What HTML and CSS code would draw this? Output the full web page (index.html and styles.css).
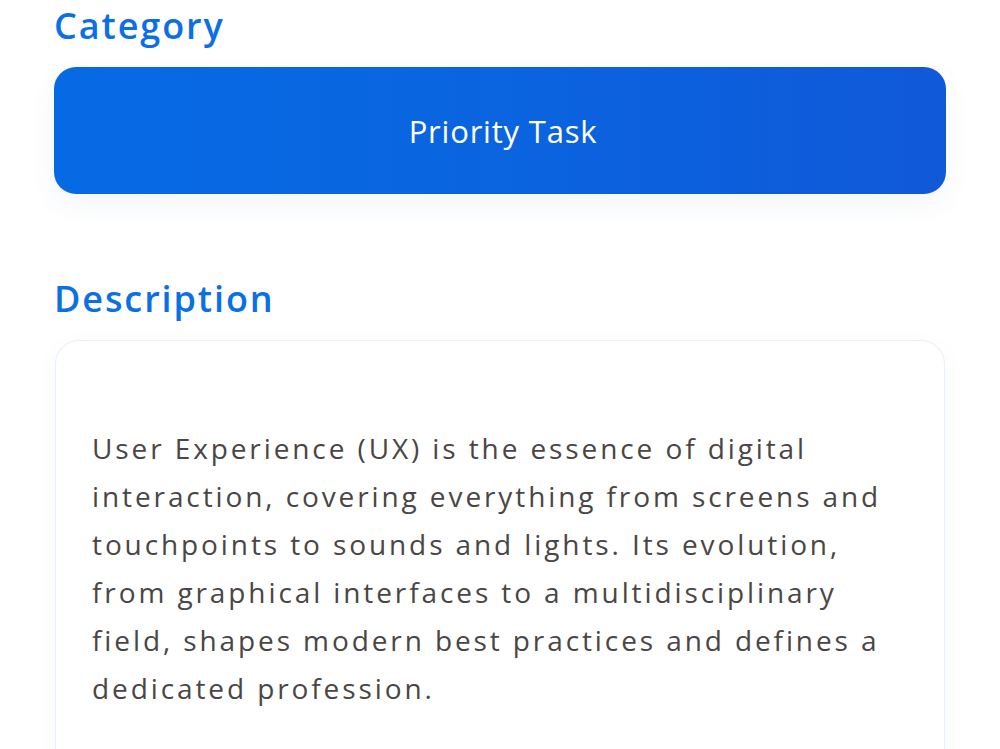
FILE: index.html
```html
<!DOCTYPE html>
<html lang="en">
<head>
<meta charset="utf-8">
<title>Task details</title>
<link rel="stylesheet" href="styles.css">
</head>
<body>
<main class="form">
  <section class="field">
    <h2 class="field-label">Category</h2>
    <div class="category-pill">Priority Task</div>
  </section>
  <section class="field field-description">
    <h2 class="field-label">Description</h2>
    <div class="description-card">
      <p class="description-text">User Experience (UX) is the essence of digital interaction, covering everything from screens and touchpoints to sounds and lights. Its evolution, from graphical interfaces to a multidisciplinary field, shapes modern best practices and defines a dedicated profession.</p>
    </div>
  </section>
</main>
</body>
</html>
```

FILE: styles.css
```css
* {
  box-sizing: border-box;
}

html, body {
  margin: 0;
  padding: 0;
  background: #ffffff;
  overflow: hidden;
}

body {
  font-family: "Open Sans", "Noto Sans", sans-serif;
}

.form {
  padding: 0 54px;
  display: flex;
  flex-direction: column;
}

.field {
  display: flex;
  flex-direction: column;
  gap: 17px;
}

.field-label {
  margin: 0;
  padding-top: 2px;
  font-size: 36px;
  line-height: 48px;
  font-weight: 600;
  letter-spacing: 1.9px;
  color: #0b6fe6;
}

.category-pill {
  height: 127px;
  border-radius: 22px;
  background: linear-gradient(90deg, #066ae4 0%, #0b63df 55%, #1059d9 100%);
  color: #ffffff;
  font-size: 31px;
  letter-spacing: 0.8px;
  display: flex;
  align-items: center;
  justify-content: center;
  padding-left: 6px;
  box-shadow: 0 10px 28px rgba(30, 80, 160, 0.06);
}

.field-description {
  margin-top: 79px;
}

.description-card {
  margin: 0 1px;
  min-height: 460px;
  border: 1.5px solid #e7f0fc;
  border-radius: 24px;
  padding: 83px 36px 40px;
  box-shadow: 0 6px 24px rgba(30, 80, 160, 0.04);
}

.description-text {
  margin: 0;
  font-size: 28px;
  line-height: 48px;
  letter-spacing: 2.9px;
  color: #4a4646;
}
```
